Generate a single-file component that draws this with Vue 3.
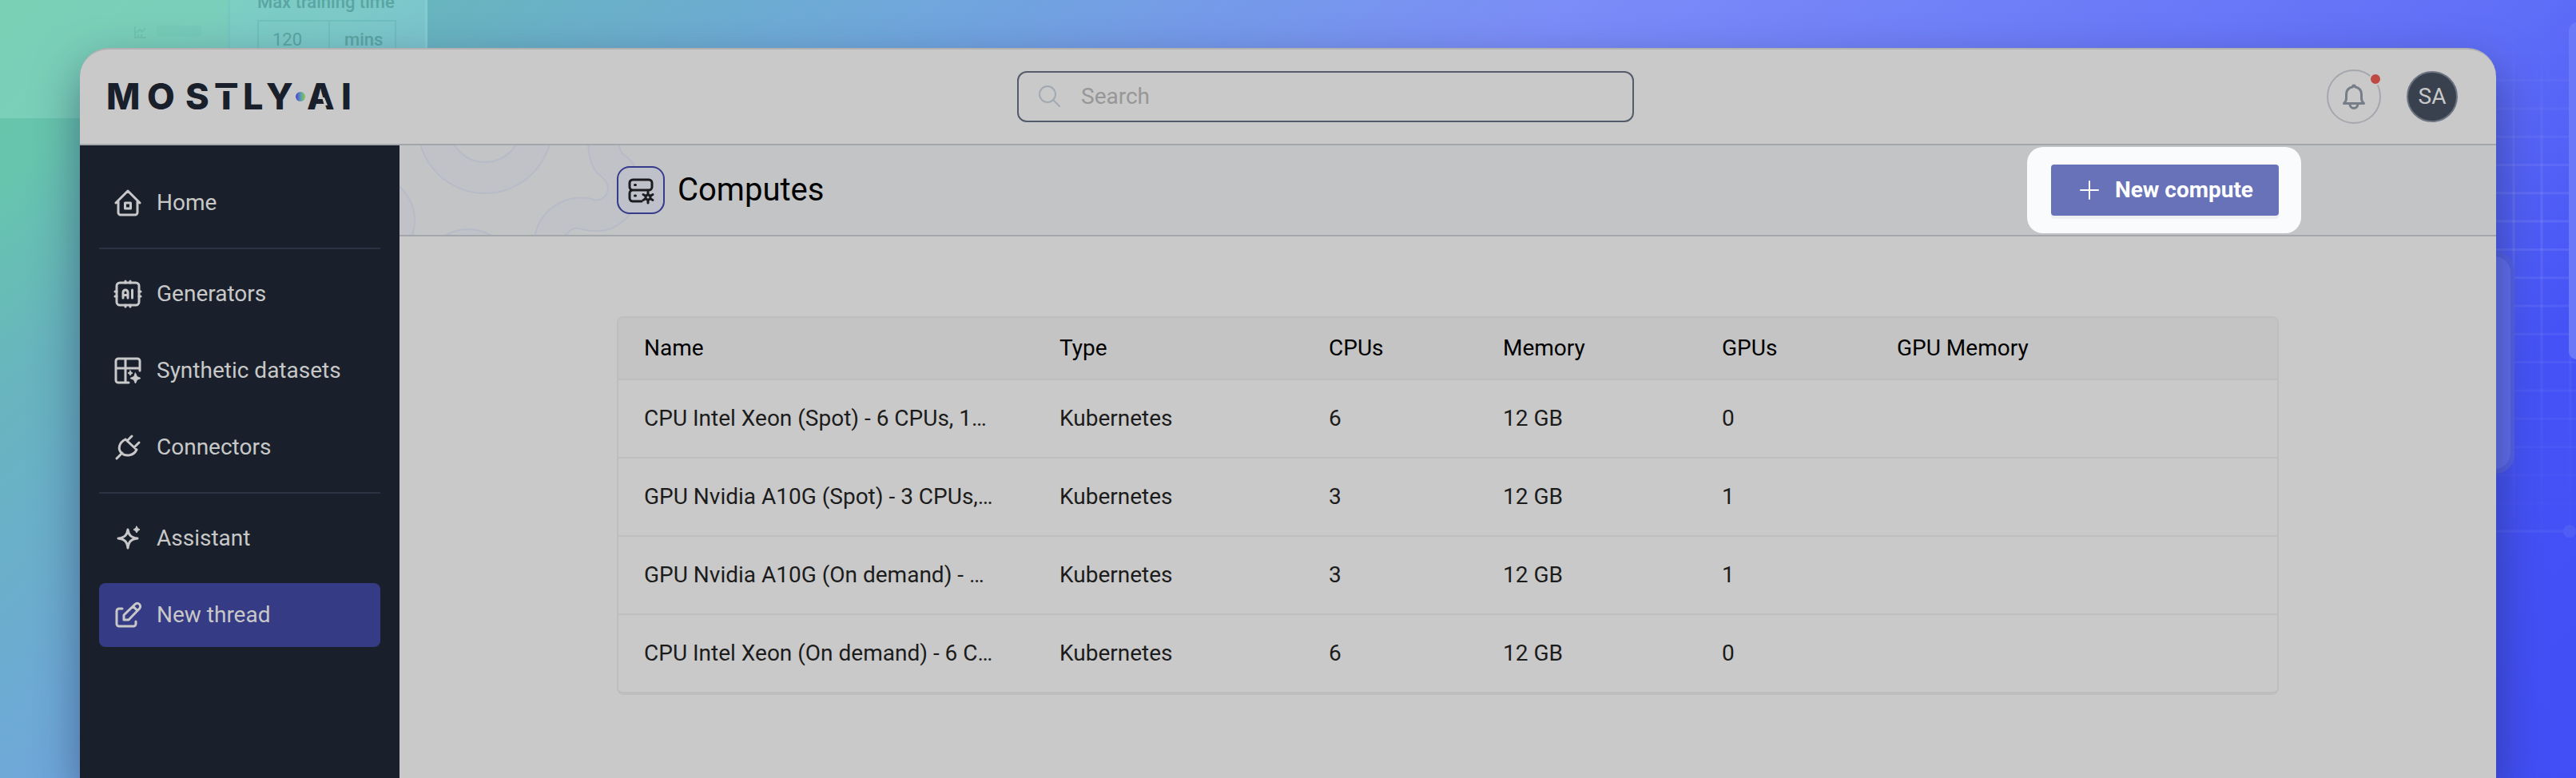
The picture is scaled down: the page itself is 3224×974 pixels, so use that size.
<script setup>
const navGroups = [
  [{ label: 'Home', icon: 'home' }],
  [
    { label: 'Generators', icon: 'chip' },
    { label: 'Synthetic datasets', icon: 'dataset' },
    { label: 'Connectors', icon: 'plug' },
  ],
  [
    { label: 'Assistant', icon: 'spark' },
    { label: 'New thread', icon: 'edit', active: true },
  ],
]

const columns = ['Name', 'Type', 'CPUs', 'Memory', 'GPUs', 'GPU Memory']

const computes = [
  ['CPU Intel Xeon (Spot) - 6 CPUs, 1…', 'Kubernetes', '6', '12 GB', '0', ''],
  ['GPU Nvidia A10G (Spot) - 3 CPUs,…', 'Kubernetes', '3', '12 GB', '1', ''],
  ['GPU Nvidia A10G (On demand) - …', 'Kubernetes', '3', '12 GB', '1', ''],
  ['CPU Intel Xeon (On demand) - 6 C…', 'Kubernetes', '6', '12 GB', '0', ''],
]
</script>

<template>
  <div class="stage">
    <div class="decor-left" aria-hidden="true">
      <div class="decor-list">
        <svg width="16" height="16" viewBox="0 0 16 16"><path d="M1 1v14h14M3 9l4-4 3 3 4-5M5 15v-4M9 15v-4" /></svg>
        <span class="decor-bar"></span>
      </div>
      <div class="decor-form">
        <div class="decor-label">Max training time</div>
        <div class="decor-field"><span>120</span><b>mins</b></div>
      </div>
    </div>

    <svg class="decor-right" aria-hidden="true" width="124" height="974" viewBox="0 0 124 974">
      <defs>
        <linearGradient id="gridFade" x1="0" y1="0" x2="0" y2="1">
          <stop offset="0" stop-color="#fff" stop-opacity="0" />
          <stop offset="0.35" stop-color="#fff" stop-opacity="1" />
          <stop offset="0.6" stop-color="#fff" stop-opacity="0.6" />
          <stop offset="1" stop-color="#fff" stop-opacity="0" />
        </linearGradient>
        <mask id="gridMask"><rect width="124" height="680" y="30" fill="url(#gridFade)" /></mask>
      </defs>
      <g mask="url(#gridMask)">
        <g class="grid-lines">
          <path v-for="n in 18" :key="'h' + n" :d="`M0 ${30 + n * 35.3}H124`" />
          <path d="M10 30V700M46 30V700M81 30V700M117 30V700" />
        </g>
      </g>
      <path class="grid-last" d="M0 665H124" />
      <circle class="grid-dot" cx="116" cy="665" r="8" />
      <rect class="panel-back" x="-60" y="315" width="107" height="278" rx="24" />
      <rect class="panel-front" x="-60" y="321" width="102" height="266" rx="20" />
      <rect class="panel-edge" x="115" y="28" width="60" height="422" rx="10" />
    </svg>

    <div class="window">
      <header class="topbar">
        <a class="brand" href="#" aria-label="Mostly AI">
          <svg width="320" height="40" viewBox="-8 0 320 40">
            <defs>
              <linearGradient id="dotFill">
                <stop offset="0.1" stop-color="#4a50cf" />
                <stop offset="0.55" stop-color="#5f9fb0" />
                <stop offset="1" stop-color="#86c948" />
              </linearGradient>
            </defs>
            <text class="wordmark" y="36" x="-3 48 96 132 168 197 248 291">MOSTLYAI</text>
            <path class="cutout" d="M132 9h34v4h-34zM267 21h3l4 10h-4z" />
            <circle cx="240" cy="20" r="6" fill="url(#dotFill)" />
          </svg>
        </a>
        <label class="search">
          <svg width="28" height="28" viewBox="0 0 28 28"><circle cx="11" cy="11" r="10" /><path d="M18 18l8 8" /></svg>
          <input type="text" placeholder="Search" aria-label="Search" />
        </label>
        <div class="account">
          <button class="bell" type="button" aria-label="Notifications">
            <svg width="32" height="32" viewBox="0 0 32 32">
              <path d="M16 2c-1 0-1.500 .8-1.500 1.800C9.500 5 6.500 8.500 6.500 13v5c0 2.500-.5 4.500-3 6.500h25c-2.500-2-3-4-3-6.500v-5c0-4.500-3-8-8-9.200C17.500 2.800 17 2 16 2z" />
              <path d="M11 25a5 5.500 0 0 0 10 0" />
            </svg>
            <span class="badge"></span>
          </button>
          <button class="avatar" type="button">SA</button>
        </div>
      </header>

      <div class="body">
        <nav class="sidebar">
          <template v-for="(group, gi) in navGroups" :key="gi">
            <hr v-if="gi > 0" />
            <a v-for="item in group" :key="item.label" href="#" class="nav-item" :class="{ active: item.active }">
              <svg width="36" height="36" viewBox="0 0 36 36">
                <g v-if="item.icon === 'home'">
                  <path d="M3 18L18 3l15 15M6 16v14a3 3 0 0 0 3 3h18a3 3 0 0 0 3-3V16" />
                  <path d="M14.500 18h7v7h-7z" />
                </g>
                <g v-else-if="item.icon === 'chip'">
                  <rect x="4" y="4" width="28" height="28" rx="4" />
                  <path d="M15 4V2M21 4V2M15 34v-2M21 34v-2M4 15H2M4 21H2M34 15h-2M34 21h-2" />
                  <path d="M12 23v-7a3 3 0 0 1 6 0v7M12 19.500h6M23.500 13v10" />
                </g>
                <g v-else-if="item.icon === 'dataset'">
                  <path d="M19 33H6a3 3 0 0 1-3-3V6a3 3 0 0 1 3-3h24a3 3 0 0 1 3 3v12M3 15h30M15 3v30" />
                  <path class="solid" d="M27.500 21l2 4.500 4.500 2-4.500 2-2 4.500-2-4.500-4.500-2 4.500-2zM21 18l1 2 2 1-2 1-1 2-1-2-2-1 2-1z" />
                </g>
                <g v-else-if="item.icon === 'plug'">
                  <path d="M4 32l7-7M15 8l14 13M17 10l6-6M26 18l6-6M15 8c-8 4-10 12-5 17 5 5 15 4 19-4" />
                </g>
                <g v-else-if="item.icon === 'spark'">
                  <path d="M18 7c1 7 4 10 12 11-8 1-11 4-12 12-1-8-4-11-12-12 8-1 11-4 12-11z" />
                  <path class="solid" d="M29 3l1.500 2.500L33 7l-2.500 1.500L29 11l-1.500-2.500L25 7l2.500-1.500z" />
                </g>
                <g v-else>
                  <path d="M11 10H7a3 3 0 0 0-3 3v16a3 3 0 0 0 3 3h18a3 3 0 0 0 3-3v-3" />
                  <path d="M13 24v-6L27 4.500a3.800 3.800 0 0 1 5.500 5.500L19 24zM24.500 7l5.500 5.500" />
                </g>
              </svg>
              <span>{{ item.label }}</span>
            </a>
          </template>
        </nav>

        <main class="content">
          <div class="titlebar">
            <svg class="pattern" aria-hidden="true" width="320" height="112" viewBox="0 0 320 112">
              <g class="blob">
                <path fill-rule="evenodd" d="M23 -24a84 84 0 1 0 168 0a84 84 0 1 0 -168 0zM62 -24a45 45 0 1 0 90 0a45 45 0 1 0 -90 0z" />
                <circle cx="-37" cy="94" r="56" />
                <circle cx="86" cy="160" r="55" />
                <path d="M236 -4C237 20 243 30 248 35C258 43 262 50 261 55C259 66 250 70 243 68C233 64 215 65 205 70C185 78 172 95 169 116H206C214 104 218 103 225 104C240 108 255 108 265 104C278 98 286 90 290 84L294 26C290 18 284 14 280 11C276 8 275 3 275 -4Z" />
              </g>
            </svg>
            <div class="titlebar-inner">
              <div class="page-icon">
                <svg width="36" height="36" viewBox="0 0 36 36">
                  <path d="M19 32H8a4 4 0 0 1-4-4v-6a4 4 0 0 1 4-4h20a4 4 0 0 0 4-4V9a4 4 0 0 0-4-4H8a4 4 0 0 0-4 4v5a4 4 0 0 0 4 4" />
                  <path d="M10.500 11.500h1M10.500 25h1" />
                  <path d="M27 20v3M27 31v3M21 23.500l2.500 1.500M30.500 29l2.500 1.500M21 30.500l2.500-1.500M30.500 25l2.500-1.500" />
                  <circle cx="27" cy="27" r="3" />
                </svg>
              </div>
              <h1>Computes</h1>
              <div class="spotlight">
                <button class="primary" type="button">
                  <svg width="24" height="24" viewBox="0 0 24 24"><path d="M12 1v22M1 12h22" /></svg>
                  <span>New compute</span>
                </button>
              </div>
            </div>
          </div>

          <div class="table-card">
            <table>
              <colgroup>
                <col class="c-name" /><col class="c-type" /><col class="c-cpus" />
                <col class="c-memory" /><col class="c-gpus" /><col />
              </colgroup>
              <thead>
                <tr><th v-for="c in columns" :key="c" scope="col">{{ c }}</th></tr>
              </thead>
              <tbody>
                <tr v-for="row in computes" :key="row[0]">
                  <td v-for="(cell, i) in row" :key="i">{{ cell }}</td>
                </tr>
              </tbody>
            </table>
          </div>
        </main>
      </div>
    </div>
  </div>
</template>

<style>
body {
  margin: 0;
}
</style>

<style scoped>
.stage {
  position: relative;
  display: flex;
  box-sizing: border-box;
  min-height: 100vh;
  padding: 60px 100px 0;
  overflow: hidden;
  font-family: Roboto, "Liberation Sans", sans-serif;
  font-size: 28px;
  line-height: 40px;
  background: linear-gradient(138deg, #66c6a5 0%, #67c5ae 6%, #68b4bf 13%, #6fa8da 26%, #7b8cf8 46%, #5f6ef7 74%, #4553f6 85%, #414ef5 100%);
}
.stage *,
.stage *::before {
  box-sizing: border-box;
}

.decor-left {
  position: absolute;
  top: 0;
  left: 0;
  display: flex;
  width: 535px;
  height: 148px;
  background: rgba(164, 232, 214, 0.3);
}
.decor-list {
  display: flex;
  gap: 12px;
  width: 285px;
  padding: 32px 32px 0 168px;
}
.decor-list svg {
  fill: none;
  stroke: rgba(60, 150, 150, 0.18);
  stroke-width: 2;
}
.decor-bar {
  width: 56px;
  height: 14px;
  border-radius: 4px;
  background: rgba(60, 150, 150, 0.06);
}
.decor-form {
  width: 250px;
  padding-left: 34px;
  border-left: 3px solid rgba(90, 170, 170, 0.16);
  border-right: 3px solid rgba(150, 220, 225, 0.3);
  background: rgba(140, 210, 240, 0.14);
  color: #5aa5a3;
  font-size: 22px;
  line-height: 24px;
}
.decor-label {
  height: 25px;
  margin-top: -9px;
  font-weight: 500;
}
.decor-field {
  display: flex;
  width: 174px;
  height: 48px;
  margin-top: 9px;
  border: 2px solid rgba(70, 160, 160, 0.22);
  line-height: 46px;
}
.decor-field span {
  width: 89px;
  padding-left: 17px;
  border-right: 2px solid rgba(70, 160, 160, 0.22);
}
.decor-field b {
  padding-left: 18px;
  font-weight: 500;
}

.decor-right {
  position: absolute;
  top: 0;
  right: 0;
}
.grid-lines path {
  fill: none;
  stroke: rgba(255, 255, 255, 0.09);
  stroke-width: 3;
}
.grid-last {
  stroke: rgba(255, 255, 255, 0.05);
  stroke-width: 3;
}
.grid-dot {
  fill: #505df5;
}
.panel-back {
  fill: #5461e6;
}
.panel-front {
  fill: #626ff0;
}
.panel-edge {
  fill: #6979f8;
}

.window {
  position: relative;
  display: flex;
  flex: 1;
  flex-direction: column;
  min-width: 0;
  overflow: hidden;
  border-top: 2px solid #b1b1b1;
  border-radius: 36px 36px 0 0;
  background: #c9c9c9;
  box-shadow: 0 24px 56px rgba(30, 40, 80, 0.5);
}

.topbar {
  display: grid;
  grid-template-columns: minmax(0, 1173fr) minmax(0, 772fr) minmax(0, 1079fr);
  align-items: center;
  height: 120px;
  border-bottom: 2px solid #a3a7ac;
}
.brand {
  display: block;
  width: 320px;
  height: 40px;
  margin-left: 28px;
}
.wordmark {
  fill: #19202c;
  font-family: Inter, "Liberation Sans", sans-serif;
  font-size: 45px;
  font-weight: 800;
}
.cutout {
  fill: #c9c9c9;
}
.search {
  display: flex;
  gap: 25px;
  align-items: center;
  height: 64px;
  padding: 0 25px;
  border: 2px solid #545b6b;
  border-radius: 12px;
}
.search svg {
  flex: none;
  fill: none;
  stroke: #a3a9b1;
  stroke-width: 2;
  stroke-linecap: round;
}
.search input {
  flex: 1;
  min-width: 0;
  padding: 0;
  border: 0;
  outline: 0;
  background: transparent;
  color: #19202c;
  font: inherit;
}
.search input::placeholder {
  color: #979797;
  opacity: 1;
}
.account {
  display: flex;
  gap: 32px;
  align-items: center;
  justify-content: flex-end;
  padding-right: 48px;
}
.bell {
  position: relative;
  display: flex;
  align-items: center;
  justify-content: center;
  width: 68px;
  height: 68px;
  padding: 0;
  border: 2px solid #a5a7ae;
  border-radius: 50%;
  background: transparent;
}
.bell svg {
  fill: none;
  stroke: #777d89;
  stroke-width: 3;
  stroke-linejoin: round;
}
.badge {
  position: absolute;
  top: 2px;
  right: -3px;
  width: 16px;
  height: 16px;
  border: 2px solid #c9c9c9;
  border-radius: 50%;
  background: #bf4a43;
}
.avatar {
  width: 64px;
  height: 64px;
  padding: 0;
  border: 2px solid #6e7582;
  border-radius: 50%;
  background: #3a414e;
  color: #c9c9c9;
  font: inherit;
}

.body {
  display: flex;
  flex: 1;
}
.sidebar {
  display: flex;
  flex: none;
  flex-direction: column;
  gap: 16px;
  width: 400px;
  padding: 32px 24px;
  background: #19202c;
}
.sidebar hr {
  width: 100%;
  height: 2px;
  margin: 0;
  border: 0;
  background: #2b3241;
}
.nav-item {
  display: flex;
  gap: 18px;
  align-items: center;
  height: 80px;
  padding: 0 18px;
  border-radius: 8px;
  color: #c8c8c8;
  text-decoration: none;
}
.nav-item.active {
  background: #363b86;
}
.nav-item svg {
  flex: none;
  fill: none;
  stroke: currentColor;
  stroke-width: 3;
  stroke-linecap: round;
  stroke-linejoin: round;
}
.nav-item .solid {
  fill: currentColor;
  stroke-width: 1;
}

.content {
  flex: 1;
  min-width: 0;
}
.titlebar {
  position: relative;
  height: 114px;
  border-bottom: 2px solid #a3a7ac;
  background: #c3c4c6;
}
.pattern {
  position: absolute;
  top: 0;
  left: 0;
}
.blob {
  fill: #c1c2c7;
  stroke: #b7bbc8;
  stroke-width: 2;
}
.titlebar-inner {
  position: relative;
  display: flex;
  gap: 16px;
  align-items: center;
  max-width: 2080px;
  height: 112px;
  margin: 0 auto;
}
.page-icon {
  display: flex;
  align-items: center;
  justify-content: center;
  width: 60px;
  height: 60px;
  border: 2px solid #363b8c;
  border-radius: 16px;
  background: #bfc1ca;
}
.page-icon svg {
  fill: none;
  stroke: #1c1c20;
  stroke-width: 3;
  stroke-linecap: round;
}
h1 {
  margin: 0;
  color: #000;
  font-size: 40px;
  font-weight: 400;
  line-height: 48px;
}
.spotlight {
  margin: 0 -28px 0 auto;
  padding: 22px 28px 22px 30px;
  border-radius: 20px;
  background: #fafbfd;
}
.primary {
  display: flex;
  gap: 20px;
  align-items: center;
  height: 64px;
  padding: 0 32px 0 36px;
  border: 0;
  border-radius: 4px;
  background: #6872b9;
  box-shadow: 0 4px 0 #eff0f2;
  color: #fff;
  font: inherit;
  font-weight: 700;
}
.primary svg {
  fill: none;
  stroke: currentColor;
  stroke-width: 2;
  stroke-linecap: round;
}

.table-card {
  max-width: 2080px;
  margin: 100px auto 0;
  overflow: hidden;
  border: 2px solid #bebebe;
  border-bottom-width: 4px;
  border-radius: 8px;
}
table {
  width: 100%;
  border-spacing: 0;
  table-layout: fixed;
}
.c-name {
  width: 552px;
}
.c-type {
  width: 337px;
}
.c-cpus {
  width: 218px;
}
.c-memory {
  width: 274px;
}
.c-gpus {
  width: 219px;
}
th,
td {
  height: 98px;
  padding: 0;
  border-bottom: 2px solid #bebebe;
  color: #1c1c1c;
  font-weight: 400;
  text-align: left;
  white-space: nowrap;
}
th:first-child,
td:first-child {
  padding-left: 32px;
}
th {
  height: 78px;
  background: #c4c4c4;
  color: #000;
}
tbody tr:last-child td {
  height: 96px;
  border-bottom: 0;
}
</style>
